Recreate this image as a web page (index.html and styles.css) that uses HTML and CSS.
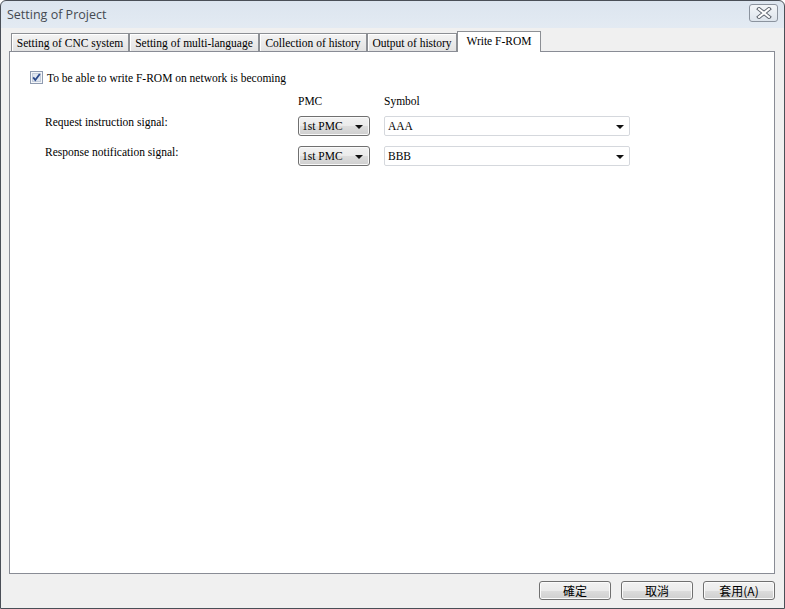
FILE: index.html
```html
<!DOCTYPE html>
<html>
<head>
  <title>Setting of Project</title>
  <link rel="stylesheet" href="styles.css">
</head>
<body>
  <div class="window">
    <div class="titlebar">
      <span class="title">Setting of Project</span>
      <button class="close-btn" title="Close">
        <svg width="16" height="12" viewBox="0 0 16 12">
          <path d="M3 2 L13 10 M13 2 L3 10" stroke="#5f6670" stroke-width="4" stroke-linecap="square"/>
          <path d="M3 2 L13 10 M13 2 L3 10" stroke="#ffffff" stroke-width="2" stroke-linecap="square"/>
        </svg>
      </button>
    </div>

    <div class="client">
      <div class="tabs">
        <div class="tab" style="width: 118px;">Setting of CNC system</div>
        <div class="tab" style="width: 130px;">Setting of multi-language</div>
        <div class="tab" style="width: 108px;">Collection of history</div>
        <div class="tab" style="width: 90px;">Output of history</div>
        <div class="tab active" style="width: 84px;">Write F-ROM</div>
      </div>

      <div class="panel">
        <label class="check-row">
          <span class="checkbox">
            <svg width="13" height="13" viewBox="0 0 13 13">
              <rect x="0.5" y="0.5" width="12" height="12" fill="#f4f6f9" stroke="#8f9bb0"/>
              <rect x="2.5" y="2.5" width="8" height="8" fill="#dfe6f0" stroke="#c4cddb"/>
              <path d="M3.2 6.4 L5.3 9 L9.8 3" fill="none" stroke="#2c4a8c" stroke-width="1.8"/>
            </svg>
          </span>
          To be able to write F-ROM on network is becoming
        </label>

        <div class="form">
          <div></div>
          <div class="col-head">PMC</div>
          <div class="col-head">Symbol</div>

          <div class="row-label">Request instruction signal:</div>
          <div class="pmc-combo"><span>1st PMC</span><span class="arrow"></span></div>
          <div class="sym-combo"><span>AAA</span><span class="arrow"></span></div>

          <div class="row-label">Response notification signal:</div>
          <div class="pmc-combo"><span>1st PMC</span><span class="arrow"></span></div>
          <div class="sym-combo"><span>BBB</span><span class="arrow"></span></div>
        </div>
      </div>

      <div class="button-bar">
        <button class="btn">確定</button>
        <button class="btn">取消</button>
        <button class="btn">套用(A)</button>
      </div>
    </div>
  </div>
</body>
</html>
```

FILE: styles.css
```css
html, body {
  margin: 0;
  padding: 0;
  background: #ffffff;
}

.window {
  width: 785px;
  height: 609px;
  box-sizing: border-box;
  border: 1px solid #4a4f57;
  border-radius: 6px 6px 0 0;
  background: linear-gradient(#dce5ef, #e4ebf3 30px, #eef1f5);
  display: flex;
  flex-direction: column;
  overflow: hidden;
}

.titlebar {
  height: 27px;
  display: flex;
  align-items: center;
  justify-content: space-between;
  padding: 0 6px 0 6px;
}

.title {
  font-family: "Open Sans", "Noto Sans", sans-serif;
  font-size: 12.5px;
  color: #454a52;
  margin-top: -1px;
}

.close-btn {
  width: 29px;
  height: 18px;
  margin-top: -4px;
  padding: 0;
  border: 1px solid #8b939e;
  border-radius: 3px;
  background: linear-gradient(#f3f6f9, #dde4ec);
  display: flex;
  align-items: center;
  justify-content: center;
}

.client {
  flex: 1;
  display: flex;
  flex-direction: column;
  background: #f0f0f0;
  padding: 3px 9px 8px 8px;
  font-family: "Liberation Serif", "Noto Sans CJK TC", serif;
  font-size: 11.5px;
  color: #000;
}

/* Tabs */
.tabs {
  display: flex;
  align-items: flex-end;
  height: 20px;
  padding-left: 2px;
}

.tab {
  height: 18px;
  box-sizing: border-box;
  border: 1px solid #8c8f94;
  border-bottom: none;
  background: linear-gradient(#f4f4f4, #e2e2e2);
  box-shadow: inset 1px 1px 0 #ffffff;
  text-align: center;
  line-height: 19px;
  white-space: nowrap;
}

.tab.active {
  height: 21px;
  margin-bottom: -1px;
  background: #ffffff;
  box-shadow: none;
  line-height: 18px;
  position: relative;
  z-index: 1;
}

.panel {
  flex: 1;
  background: #ffffff;
  border: 1px solid #898c95;
  padding: 19px 20px 0 20px;
}

.check-row {
  display: flex;
  align-items: center;
  gap: 4px;
  height: 13px;
}

.checkbox {
  display: flex;
  width: 13px;
  height: 13px;
}

/* Form grid */
.form {
  display: grid;
  grid-template-columns: 239px 72px 246px;
  column-gap: 14px;
  row-gap: 10px;
  margin: 10px 0 0 15px;
  align-items: center;
}

.col-head {
  height: 14px;
  line-height: 14px;
  margin-bottom: -2px;
}

.row-label {
  align-self: start;
  line-height: 12px;
}

.pmc-combo, .sym-combo {
  height: 20px;
  box-sizing: border-box;
  display: flex;
  align-items: center;
  justify-content: space-between;
}

.pmc-combo {
  border: 1px solid #707070;
  border-radius: 3px;
  background: linear-gradient(#f2f2f2, #ebebeb 50%, #dddddd 51%, #cfcfcf);
  box-shadow: inset 0 0 0 1px #fafafa;
  padding: 0 6px 0 3px;
}

.sym-combo {
  border: 1px solid #d5d8dd;
  border-radius: 2px;
  background: #ffffff;
  padding: 0 5px 0 3px;
}

.arrow {
  width: 0;
  height: 0;
  border-left: 4px solid transparent;
  border-right: 4px solid transparent;
  border-top: 4px solid #111;
  margin-top: 2px;
}

/* Bottom buttons */
.button-bar {
  display: flex;
  justify-content: flex-end;
  gap: 10px;
  margin-top: 7px;
}

.btn {
  width: 72px;
  height: 19px;
  padding: 0;
  border: 1px solid #707070;
  border-radius: 3px;
  background: linear-gradient(#f2f2f2, #ebebeb 50%, #dddddd 51%, #cfcfcf);
  box-shadow: inset 0 0 0 1px #fbfbfb;
  font-family: "Noto Sans CJK TC", "Liberation Sans", sans-serif;
  font-size: 12px;
  line-height: 16px;
  color: #000;
}
```
